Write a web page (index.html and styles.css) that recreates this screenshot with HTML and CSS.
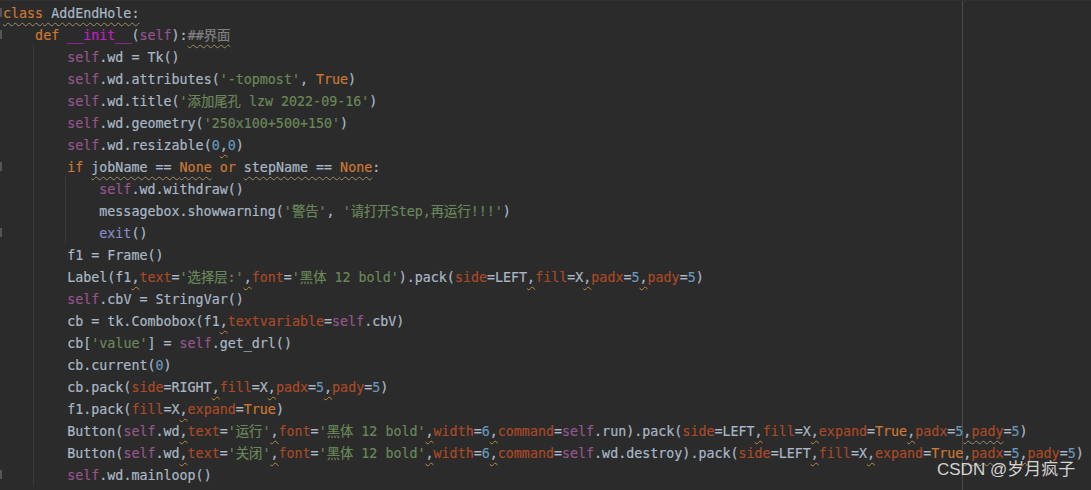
FILE: index.html
```html
<!DOCTYPE html>
<html lang="zh">
<head>
<meta charset="utf-8">
<title>AddEndHole</title>
<link rel="stylesheet" href="styles.css">
</head>
<body>
<div class="editor">
  <div class="line"><span class="g m"></span><span class="code"><span class="wv"><span class="k">class</span> AddEndHole:</span></span></div>
  <div class="line"><span class="g m"></span><span class="code">    <span class="k">def</span> <span class="f">__init__</span>(<span class="s">self</span>):<span class="cm wv">##界面</span></span></div>
  <div class="line i1"><span class="g"></span><span class="code">        <span class="s">self</span>.wd = Tk()</span></div>
  <div class="line i1"><span class="g"></span><span class="code">        <span class="s">self</span>.wd.attributes(<span class="st">'-topmost'</span>, <span class="k">True</span>)</span></div>
  <div class="line i1"><span class="g"></span><span class="code">        <span class="s">self</span>.wd.title(<span class="st">'添加尾孔 lzw 2022-09-16'</span>)</span></div>
  <div class="line i1"><span class="g"></span><span class="code">        <span class="s">self</span>.wd.geometry(<span class="st">'250x100+500+150'</span>)</span></div>
  <div class="line i1"><span class="g"></span><span class="code">        <span class="s">self</span>.wd.resizable(<span class="n">0</span><span class="w">,</span><span class="n">0</span>)</span></div>
  <div class="line i1"><span class="g m"></span><span class="code">        <span class="k">if</span> <span class="wv">jobName == <span class="k">None</span></span> <span class="k">or</span> <span class="wv">stepName == <span class="k">None</span></span>:</span></div>
  <div class="line i1 i2"><span class="g"></span><span class="code">            <span class="s">self</span>.wd.withdraw()</span></div>
  <div class="line i1 i2"><span class="g"></span><span class="code">            messagebox.showwarning(<span class="st">'警告'</span>, <span class="st">'请打开Step,再运行!!!'</span>)</span></div>
  <div class="line i1 i2"><span class="g m"></span><span class="code">            <span class="b">exit</span>()</span></div>
  <div class="line i1"><span class="g"></span><span class="code">        f1 = Frame()</span></div>
  <div class="line i1"><span class="g"></span><span class="code">        Label(f1<span class="w">,</span><span class="p">text</span>=<span class="st">'选择层:'</span><span class="w">,</span><span class="p">font</span>=<span class="st">'黑体 12 bold'</span>).pack(<span class="p">side</span>=LEFT<span class="w">,</span><span class="p">fill</span>=X<span class="w">,</span><span class="p">padx</span>=<span class="n">5</span><span class="w">,</span><span class="p">pady</span>=<span class="n">5</span>)</span></div>
  <div class="line i1"><span class="g"></span><span class="code">        <span class="s">self</span>.cbV = StringVar()</span></div>
  <div class="line i1"><span class="g"></span><span class="code">        cb = tk.Combobox(f1<span class="w">,</span><span class="p">textvariable</span>=<span class="s">self</span>.cbV)</span></div>
  <div class="line i1"><span class="g"></span><span class="code">        cb[<span class="st">'value'</span>] = <span class="s">self</span>.get_drl()</span></div>
  <div class="line i1"><span class="g"></span><span class="code">        cb.current(<span class="n">0</span>)</span></div>
  <div class="line i1"><span class="g"></span><span class="code">        cb.pack(<span class="p">side</span>=RIGHT<span class="w">,</span><span class="p">fill</span>=X<span class="w">,</span><span class="p">padx</span>=<span class="n">5</span><span class="w">,</span><span class="p">pady</span>=<span class="n">5</span>)</span></div>
  <div class="line i1"><span class="g"></span><span class="code">        f1.pack(<span class="p">fill</span>=X<span class="w">,</span><span class="p">expand</span>=<span class="k">True</span>)</span></div>
  <div class="line i1"><span class="g"></span><span class="code">        Button(<span class="s">self</span>.wd<span class="w">,</span><span class="p">text</span>=<span class="st">'运行'</span><span class="w">,</span><span class="p">font</span>=<span class="st">'黑体 12 bold'</span><span class="w">,</span><span class="p">width</span>=<span class="n">6</span><span class="w">,</span><span class="p">command</span>=<span class="s">self</span>.run).pack(<span class="p">side</span>=LEFT<span class="w">,</span><span class="p">fill</span>=X<span class="w">,</span><span class="p">expand</span>=<span class="k">True</span><span class="w">,</span><span class="p">padx</span>=<span class="n">5</span><span class="wl">,<span class="p">pady</span></span>=<span class="n">5</span>)</span></div>
  <div class="line i1"><span class="g"></span><span class="code">        Button(<span class="s">self</span>.wd<span class="w">,</span><span class="p">text</span>=<span class="st">'关闭'</span><span class="w">,</span><span class="p">font</span>=<span class="st">'黑体 12 bold'</span><span class="w">,</span><span class="p">width</span>=<span class="n">6</span><span class="w">,</span><span class="p">command</span>=<span class="s">self</span>.wd.destroy).pack(<span class="p">side</span>=LEFT<span class="w">,</span><span class="p">fill</span>=X<span class="w">,</span><span class="p">expand</span>=<span class="k">True</span><span class="wl">,<span class="p">padx</span></span>=<span class="n">5</span><span class="w">,</span><span class="p">pady</span>=<span class="n">5</span>)</span></div>
  <div class="line i1"><span class="g m"></span><span class="code">        <span class="s">self</span>.wd.mainloop()</span></div>
  <div class="watermark">CSDN @岁月疯子</div>
</div>
</body>
</html>
```
FILE: styles.css
```css
html, body {
  margin: 0;
  padding: 0;
  background: #2b2b2b;
}

.editor {
  position: relative;
  width: 1091px;
  height: 490px;
  overflow: hidden;
  box-sizing: border-box;
  padding-top: 1px;
  background-color: #2b2b2b;
  background-image: linear-gradient(#4b4b4b, #4b4b4b), linear-gradient(#323232, #323232);
  background-size: 1px 100%, 100% 1px;
  background-position: 962px 1px, 0 0;
  background-repeat: no-repeat, no-repeat;
  font-family: "DejaVu Sans Mono", "Noto Sans CJK SC", monospace;
  font-size: 13.33px;
  color: #a9b7c6;
}

.line {
  display: flex;
  align-items: flex-start;
  height: 22px;
}

.line.i1 {
  background-image: linear-gradient(#3b3b3b, #3b3b3b);
  background-size: 1px 100%;
  background-position: 33px 0;
  background-repeat: no-repeat;
}

.line.i1.i2 {
  background-image: linear-gradient(#3b3b3b, #3b3b3b), linear-gradient(#3b3b3b, #3b3b3b);
  background-size: 1px 100%, 1px 100%;
  background-position: 33px 0, 65px 0;
  background-repeat: no-repeat, no-repeat;
}

.g {
  flex: none;
  align-self: center;
  width: 2px;
  height: 9px;
}

.g.m {
  background: #555555;
}

.code {
  white-space: pre;
  padding-left: 1px;
  padding-top: 2px;
  line-height: 22px;
  -webkit-text-stroke: 0.2px currentColor;
}

.k { color: #cc7832; }
.s { color: #94558d; }
.st { color: #6a8759; }
.n { color: #6897bb; }
.p { color: #aa4926; }
.f { color: #c020c0; }
.cm { color: #808080; }
.b { color: #8888c6; }

.wv, .wl {
  text-decoration: underline wavy #9a8f6a;
  text-decoration-thickness: 1px;
  text-underline-offset: 4px;
  text-decoration-skip-ink: none;
}

.w {
  text-decoration: underline wavy #c08a3c;
  text-decoration-thickness: 1px;
  text-underline-offset: 4px;
  text-decoration-skip-ink: none;
}

.watermark {
  position: absolute;
  left: 937px;
  top: 459px;
  font-family: "Liberation Sans", "Noto Sans CJK SC", sans-serif;
  font-size: 17px;
  line-height: 22px;
  color: rgba(235, 235, 235, 0.88);
  white-space: nowrap;
}
```
